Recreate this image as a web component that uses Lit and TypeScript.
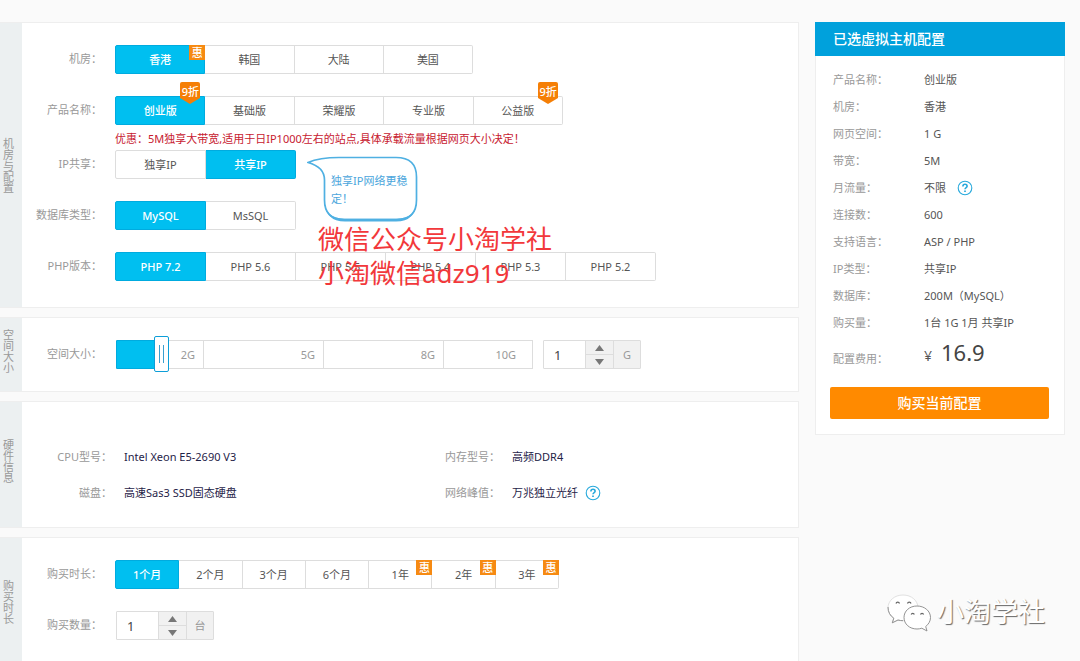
import { LitElement, html, svg, css, nothing } from "lit";
import { customElement, property, state } from "lit/decorators.js";
import { classMap } from "lit/directives/class-map.js";

interface Option {
  text: string;
  badge?: "deal" | "discount";
}

interface Group {
  id: string;
  label: string;
  size: string;
  options: Option[];
}

const REGION: Group = {
  id: "region",
  label: "机房：",
  size: "four",
  options: [{ text: "香港", badge: "deal" }, { text: "韩国" }, { text: "大陆" }, { text: "美国" }],
};
const PRODUCT: Group = {
  id: "product",
  label: "产品名称：",
  size: "five",
  options: [
    { text: "创业版", badge: "discount" },
    { text: "基础版" },
    { text: "荣耀版" },
    { text: "专业版" },
    { text: "公益版", badge: "discount" },
  ],
};
const SHARING: Group = {
  id: "sharing",
  label: "IP共享：",
  size: "two",
  options: [{ text: "独享IP" }, { text: "共享IP" }],
};
const DATABASE: Group = {
  id: "database",
  label: "数据库类型：",
  size: "two",
  options: [{ text: "MySQL" }, { text: "MsSQL" }],
};
const PHP: Group = {
  id: "php",
  label: "PHP版本：",
  size: "six",
  options: ["7.2", "5.6", "5.5", "5.4", "5.3", "5.2"].map((v) => ({ text: `PHP ${v}` })),
};
const PERIOD: Group = {
  id: "period",
  label: "购买时长：",
  size: "seven",
  options: [
    { text: "1个月" },
    { text: "2个月" },
    { text: "3个月" },
    { text: "6个月" },
    { text: "1年", badge: "deal" },
    { text: "2年", badge: "deal" },
    { text: "3年", badge: "deal" },
  ],
};

const base = css`
  * {
    box-sizing: border-box;
  }
  button,
  input {
    font: inherit;
    color: inherit;
  }
`;

@customElement("help-button")
class HelpButton extends LitElement {
  static styles = [
    base,
    css`
      :host {
        display: inline-flex;
      }
      .help {
        display: block;
        width: 16px;
        height: 16px;
        padding: 0;
        border: 0;
        background: none;
        cursor: pointer;
      }
      svg {
        display: block;
      }
    `,
  ];
  render() {
    return html`<button class="help" type="button" aria-label="帮助">
      ${svg`<svg width="16" height="16" viewBox="0 0 16 16" fill="none" stroke="#27a9dc">
        <circle cx="8" cy="8" r="6.8" stroke-width="1.1" />
        <path d="M5.9 6.4C5.9 5 6.8 4.3 8 4.3S10.1 5 10.1 6.2C10.1 7.5 8 7.6 8 9.3" stroke-width="1.6" />
        <path d="M8 10.4V12" stroke-width="1.7" />
      </svg>`}
    </button>`;
  }
}

@customElement("option-group")
class OptionGroup extends LitElement {
  @property({ attribute: false }) group!: Group;
  @property({ type: Number }) selected = 0;

  static styles = [
    base,
    css`
      :host {
        display: block;
      }
      .group {
        display: flex;
      }
      .two {
        width: 181px;
      }
      .four {
        width: 358px;
      }
      .five {
        width: 448px;
      }
      .six {
        width: 541px;
      }
      .seven {
        width: 444px;
      }
      .option {
        position: relative;
        flex: 1;
        height: 29px;
        line-height: 28px;
        text-align: center;
        color: #555;
        border: 1px solid #ddd;
        border-left-width: 0;
        cursor: pointer;
      }
      .option:first-child {
        border-left-width: 1px;
        border-radius: 2px 0 0 2px;
      }
      .option:last-child {
        border-radius: 0 2px 2px 0;
      }
      .option.on {
        background: #00bff0;
        border-color: #00abdf;
        color: #fff;
        font-weight: 500;
      }
      .radio {
        position: absolute;
        inset: 0;
        margin: 0;
        opacity: 0;
        cursor: pointer;
      }
      .deal {
        position: absolute;
        top: -1px;
        right: -1px;
        width: 16px;
        height: 15px;
        line-height: 15px;
        font-size: 11px;
        font-weight: 500;
        color: #fff;
        background: #f68a12;
      }
      .discount {
        position: absolute;
        top: -15px;
        right: 4px;
        width: 20px;
        height: 22px;
        line-height: 19px;
        font-size: 11px;
        font-weight: 500;
        color: #fff;
      }
      .discount svg {
        position: absolute;
        inset: 0;
      }
      .discount .word {
        position: relative;
        display: flex;
        justify-content: center;
      }
    `,
  ];

  private pick(i: number) {
    this.dispatchEvent(new CustomEvent("pick", { detail: i }));
  }

  private badge(kind?: string) {
    if (kind === "deal") return html`<span class="deal">惠</span>`;
    if (kind === "discount")
      return html`<span class="discount">
        ${svg`<svg width="20" height="22" viewBox="0 0 20 22"><path d="M2 0H18Q20 0 20 2V16L10 22L0 16V2Q0 0 2 0Z" fill="#f57f06"/></svg>`}
        <span class="word">9折</span>
      </span>`;
    return nothing;
  }

  render() {
    const g = this.group;
    return html`<div class="group ${g.size}" role="radiogroup" aria-label=${g.label}>
      ${g.options.map(
        (o, i) => html`<label class=${classMap({ option: true, on: i === this.selected })}>
          <input class="radio" type="radio" name=${g.id} .checked=${i === this.selected} @change=${() => this.pick(i)} />
          ${o.text}${this.badge(o.badge)}
        </label>`
      )}
    </div>`;
  }
}

@customElement("quantity-box")
class QuantityBox extends LitElement {
  @property() unit = "";
  @property() label = "";
  @state() private amount = 1;

  static styles = [
    base,
    css`
      :host {
        display: block;
      }
      .box {
        display: flex;
        width: 98px;
        height: 29px;
        border: 1px solid #ddd;
        border-radius: 1px;
        background: #f1f1f1;
      }
      .amount {
        width: 41px;
        padding: 0 10px;
        border: 0;
        outline: 0;
        background: #fff;
        font-size: 13px;
        color: #444;
      }
      .steps {
        display: flex;
        flex-direction: column;
        width: 29px;
        border-left: 1px solid #ddd;
        border-right: 1px solid #ddd;
      }
      .step {
        flex: 1;
        display: flex;
        align-items: center;
        justify-content: center;
        padding: 0;
        border: 0;
        background: none;
        cursor: pointer;
      }
      .step:first-child {
        border-bottom: 1px solid #ddd;
      }
      .unit {
        flex: 1;
        line-height: 28px;
        text-align: center;
        color: #999;
      }
    `,
  ];

  render() {
    return html`<div class="box">
      <input class="amount" type="text" inputmode="numeric" aria-label=${this.label} .value=${String(this.amount)} />
      <span class="steps">
        <button class="step" type="button" aria-label="增加" @click=${() => this.amount++}>
          ${svg`<svg width="9" height="6" viewBox="0 0 9 6"><path d="M4.5 0L9 6H0Z" fill="#777"/></svg>`}
        </button>
        <button class="step" type="button" aria-label="减少" @click=${() => (this.amount = Math.max(1, this.amount - 1))}>
          ${svg`<svg width="9" height="6" viewBox="0 0 9 6"><path d="M4.5 6L9 0H0Z" fill="#777"/></svg>`}
        </button>
      </span>
      <span class="unit">${this.unit}</span>
    </div>`;
  }
}

@customElement("space-slider")
class SpaceSlider extends LitElement {
  @state() private position = 9.5;

  static styles = [
    base,
    css`
      :host {
        display: block;
      }
      .slider {
        position: relative;
        display: grid;
        grid-template-columns: 87px 120px 120px 89px;
        height: 29px;
        border-left: 1px solid #ddd;
      }
      .mark {
        padding-right: 8px;
        border: 1px solid #ddd;
        border-left: 0;
        line-height: 27px;
        text-align: right;
        color: #999;
      }
      .mark:nth-child(4) {
        padding-right: 16px;
      }
      .fill {
        position: absolute;
        top: 0;
        bottom: 0;
        left: -1px;
        background: #00bff0;
        border: 1px solid #00abdf;
        border-radius: 1px;
      }
      .range {
        position: absolute;
        top: -4px;
        left: -1px;
        width: 100%;
        height: 36px;
        margin: 0;
        appearance: none;
        background: none;
      }
      .range::-webkit-slider-thumb {
        appearance: none;
        width: 15px;
        height: 36px;
        border: 1px solid #0d9ed8;
        border-radius: 2px;
        background:
          linear-gradient(#3a9fcf, #3a9fcf) 4px 8px / 1px 18px no-repeat,
          linear-gradient(#3a9fcf, #3a9fcf) 8px 8px / 1px 18px no-repeat,
          #fff;
        cursor: pointer;
      }
    `,
  ];

  render() {
    return html`<div class="slider">
      ${["2G", "5G", "8G", "10G"].map((m) => html`<span class="mark">${m}</span>`)}
      <span class="fill" style="width:${this.position}%"></span>
      <input
        class="range"
        type="range"
        min="0"
        max="100"
        step="0.5"
        aria-label="空间大小"
        .value=${String(this.position)}
        @input=${(e: Event) => (this.position = Number((e.target as HTMLInputElement).value))}
      />
    </div>`;
  }
}

@customElement("app-root")
class AppRoot extends LitElement {
  @state() private picks: Record<string, number> = { sharing: 1 };

  static styles = [
    base,
    css`
      :host {
        display: block;
        min-height: 100vh;
        background: #fafafa;
        font-family: "Noto Sans", "Noto Sans CJK SC", sans-serif;
        font-size: 11px;
        line-height: 20px;
        color: #555;
      }
      .page {
        position: relative;
        display: flex;
        align-items: flex-start;
        gap: 16px;
        padding: 22px 15px 0 0;
      }
      .main {
        flex: 1;
        display: flex;
        flex-direction: column;
        gap: 9px;
        min-width: 0;
      }
      .card {
        display: flex;
        background: #fff;
        border: 1px solid #eee;
        border-left: 0;
      }
      .tab {
        display: flex;
        align-items: center;
        width: 22px;
        flex: none;
        margin: 0;
        padding: 0 6px 0 3px;
        background: #ecf0f1;
        font-size: 11px;
        font-weight: 400;
        line-height: 11px;
        color: #999;
        word-break: break-all;
      }
      .tab.raised {
        padding-bottom: 8px;
      }
      .rows {
        flex: 1;
        display: flex;
        flex-direction: column;
        gap: 22px;
        padding: 22px 0;
      }
      .rows.tall {
        padding-bottom: 26px;
      }
      .row {
        display: grid;
        grid-template-columns: 80px auto auto 1fr;
        column-gap: 13px;
        position: relative;
      }
      .label {
        line-height: 28px;
        text-align: right;
        color: #999;
        white-space: nowrap;
      }
      .controls {
        display: flex;
        gap: 10px;
        padding-left: 1px;
      }
      .notice {
        grid-column: 2 / -1;
        margin: 0;
        padding-top: 4px;
        margin-bottom: -21px;
        color: #c7202f;
      }
      .bubble {
        position: absolute;
        left: 285px;
        top: 6px;
        width: 111px;
        height: 66px;
        z-index: 1;
      }
      .bubble svg {
        position: absolute;
        inset: 0;
      }
      .tip {
        position: relative;
        margin: 0;
        padding: 16px 9px 0 24px;
        line-height: 18px;
        color: #4ba6dc;
      }
      .hardware {
        flex: 1;
        display: grid;
        grid-template-columns: 1fr 1fr;
        row-gap: 16px;
        margin: 0;
        padding: 45px 0 24px;
      }
      .spec {
        display: grid;
        grid-template-columns: 90px 1fr;
        column-gap: 12px;
      }
      .spec dt {
        text-align: right;
        color: #999;
      }
      .spec dd {
        display: flex;
        align-items: center;
        gap: 7px;
        margin: 0;
        color: #1f2348;
      }
      .side {
        width: 250px;
        flex: none;
        background: #fff;
        border: 1px solid #eee;
        border-top: 0;
      }
      .side-title {
        margin: 0 -1px;
        padding-left: 18px;
        background: #00a1dc;
        font-size: 14px;
        font-weight: 500;
        line-height: 34px;
        color: #fff;
      }
      .summary {
        margin: 0;
        padding: 10px 0 0 17px;
      }
      .line {
        display: grid;
        grid-template-columns: 91px 1fr;
        line-height: 27px;
      }
      .line dt {
        color: #999;
      }
      .line dd {
        display: flex;
        align-items: center;
        gap: 11px;
        margin: 0;
      }
      .total {
        line-height: 32px;
      }
      .total dt {
        padding-top: 7px;
      }
      .total dd {
        align-items: baseline;
        gap: 9px;
        font-size: 14px;
      }
      .price {
        font-size: 22px;
        color: #444;
      }
      .buy {
        display: block;
        width: calc(100% - 29px);
        height: 32px;
        margin: 12px 15px 15px 14px;
        padding: 0;
        border: 0;
        border-radius: 2px;
        background: #ff8a00;
        font-size: 14px;
        font-weight: 500;
        color: #fff;
        cursor: pointer;
      }
      .stamp {
        position: absolute;
        left: 318px;
        top: 222px;
        z-index: 2;
        margin: 0;
        font-size: 26px;
        line-height: 34px;
        color: #f2383b;
        pointer-events: none;
      }
      .signature {
        position: absolute;
        right: 35px;
        top: 590px;
        display: flex;
        align-items: center;
        gap: 5px;
        font-size: 27px;
        line-height: 44px;
        color: #fff;
        text-shadow: 1px 1px 1px #666;
      }
    `,
  ];

  private options(group: Group) {
    return html`<span class="label">${group.label}</span>
      <option-group
        .group=${group}
        .selected=${this.picks[group.id] ?? 0}
        @pick=${(e: CustomEvent) => (this.picks = { ...this.picks, [group.id]: e.detail })}
      ></option-group>`;
  }

  private entry(kind: string, name: string, value: string, help = false) {
    return html`<div class=${kind}>
      <dt>${name}</dt>
      <dd>${value}${help ? html`<help-button></help-button>` : nothing}</dd>
    </div>`;
  }

  private spec(name: string, value: string, help = false) {
    return this.entry("spec", name, value, help);
  }

  private line(name: string, value: string, help = false) {
    return this.entry("line", name, value, help);
  }

  render() {
    return html`<div class="page">
      <main class="main">
        <section class="card">
          <h2 class="tab">机房与配置</h2>
          <div class="rows tall">
            <div class="row">${this.options(REGION)}</div>
            <div class="row">
              ${this.options(PRODUCT)}
              <p class="notice">优惠：5M独享大带宽,适用于日IP1000左右的站点,具体承载流量根据网页大小决定！</p>
            </div>
            <div class="row">
              ${this.options(SHARING)}
              <div class="bubble">
                ${svg`<svg width="111" height="66" viewBox="0 0 111 66">
                  <path d="M1 6.5C9 3 18 1.5 32 1.5H89Q109.500 1.500 109.500 21V44Q109.500 63.500 90 63.500H37Q17.500 63.500 17.500 44V24Q17.500 11 1 6.500Z" fill="#fff" stroke="#4fb0e2" stroke-width="1.700"/>
                  <path d="M17.500 45Q18 62.500 38 62.800H89Q109 62.500 109.500 45Q109 65.500 89 65.500H38Q18 65.500 17.500 45Z" fill="#4fb0e2"/>
                </svg>`}
                <p class="tip">独享IP网络更稳定！</p>
              </div>
            </div>
            <div class="row">${this.options(DATABASE)}</div>
            <div class="row">${this.options(PHP)}</div>
          </div>
        </section>

        <section class="card">
          <h2 class="tab raised">空间大小</h2>
          <div class="rows">
            <div class="row">
              <span class="label">空间大小：</span>
              <div class="controls">
                <space-slider></space-slider>
                <quantity-box unit="G" label="空间大小"></quantity-box>
              </div>
            </div>
          </div>
        </section>

        <section class="card">
          <h2 class="tab raised">硬件信息</h2>
          <dl class="hardware">
            ${this.spec("CPU型号：", "Intel Xeon E5-2690 V3")} ${this.spec("内存型号：", "高频DDR4")}
            ${this.spec("磁盘：", "高速Sas3 SSD固态硬盘")} ${this.spec("网络峰值：", "万兆独立光纤", true)}
          </dl>
        </section>

        <section class="card">
          <h2 class="tab">购买时长</h2>
          <div class="rows tall">
            <div class="row">${this.options(PERIOD)}</div>
            <div class="row">
              <span class="label">购买数量：</span>
              <div class="controls"><quantity-box unit="台" label="购买数量"></quantity-box></div>
            </div>
          </div>
        </section>
      </main>

      <aside class="side">
        <h2 class="side-title">已选虚拟主机配置</h2>
        <dl class="summary">
          ${this.line("产品名称：", "创业版")} ${this.line("机房：", "香港")} ${this.line("网页空间：", "1 G")}
          ${this.line("带宽：", "5M")} ${this.line("月流量：", "不限", true)} ${this.line("连接数：", "600")}
          ${this.line("支持语言：", "ASP / PHP")} ${this.line("IP类型：", "共享IP")}
          ${this.line("数据库：", "200M（MySQL）")} ${this.line("购买量：", "1台 1G 1月 共享IP")}
          <div class="line total">
            <dt>配置费用：</dt>
            <dd>¥ <span class="price">16.9</span></dd>
          </div>
        </dl>
        <button class="buy" type="button">购买当前配置</button>
      </aside>

      <p class="stamp">微信公众号小淘学社<br />小淘微信adz919</p>
      <div class="signature">
        ${svg`<svg width="46" height="40" viewBox="0 0 46 40" fill="#fff" stroke="#888" stroke-width="0.900">
          <path d="M17 3C8.500 3 2 8.600 2 16C2 20.200 4.200 23.800 7.800 26.200L6.300 30.800L12 28Q14.400 28.700 17 28.700C25.500 28.700 32 23 32 16C32 8.600 25.500 3 17 3Z" stroke="#ddd"/>
          <path d="M2 15C2 20.200 4.200 23.800 7.800 26.200L6.300 30.800L12 28Q14.400 28.700 17 28.700" fill="none"/>
          <path d="M31 14C23.500 14 18 19 18 25.500C18 32 23.500 37 31 37Q33.500 37 35.800 36.200L41 39L39.700 34.500C42.500 32.300 44.500 29.200 44.500 25.500C44.500 19 38.500 14 31 14Z"/>
          <path d="M10 11.500A1.800 1.800 0 0 1 13.500 11.500M21.500 11.500A1.800 1.800 0 0 1 25 11.500M25.200 22.500A1.600 1.600 0 0 1 28.300 22.500M34.500 22.500A1.600 1.600 0 0 1 37.600 22.500" fill="none" stroke="#666" stroke-width="1.200"/>
        </svg>`}
        <span>小淘学社</span>
      </div>
    </div>`;
  }
}
